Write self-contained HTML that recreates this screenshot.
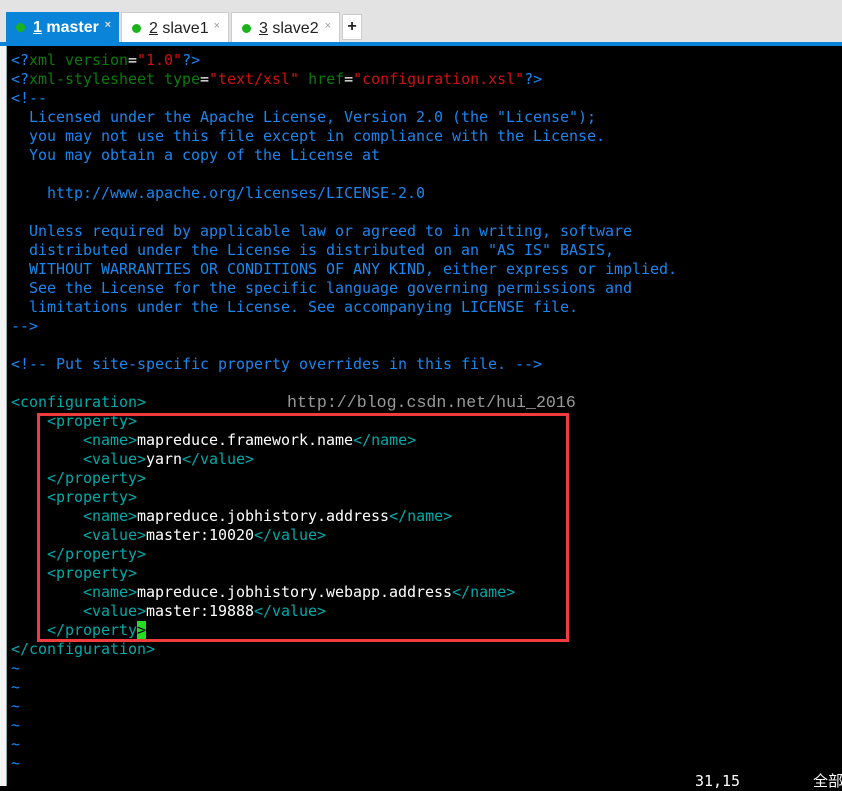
<!DOCTYPE html>
<html><head><meta charset="utf-8"><style>
html,body{margin:0;padding:0;width:842px;height:786px;overflow:hidden;background:#000;}
#top{position:absolute;left:0;top:0;width:842px;height:42px;background:#e3e3e3;}
#band{position:absolute;left:0;top:42px;width:842px;height:4px;background:#0a84d8;}
#left{position:absolute;left:0;top:46px;width:6px;height:740px;background:#f4f4f4;border-right:1px solid #8aa;}
.tab{position:absolute;top:12px;height:30px;font:16px "Liberation Sans",sans-serif;line-height:31px;color:#222;box-sizing:border-box;}
.tab .dot{display:inline-block;width:9px;height:9px;border-radius:50%;background:#1bb31b;margin:0 8px 0 10px;vertical-align:0px;}
.tab u{text-decoration:underline;}
.x{position:absolute;right:8px;top:-2px;font-size:11px;color:#999;}
.t{position:absolute;left:0;white-space:pre;font:15px "DejaVu Sans Mono","Liberation Mono",monospace;line-height:19px;color:#fff;letter-spacing:-0.03px;}
.c{color:#1a86f0}.g{color:#00aaaa}.d{color:#0a7a0a}.r{color:#d01010}.b{color:#1a86f0}
#box{position:absolute;left:37px;top:413px;width:526px;height:223px;border:3px solid #f03c3c;}
#wm{position:absolute;left:287px;top:393px;font:16.6px "Liberation Mono",monospace;color:#9a9a9a;}
#cur{background:#22dd22;color:#000}
</style></head><body>
<div id="top"></div>
<div id="band"></div>
<div id="left"></div>
<div class="tab" style="left:6px;width:113px;background:#0a84d8;color:#fff;font-weight:bold;"><span class="dot"></span><u>1</u> master<span class="x" style="color:#ddd">×</span></div>
<div class="tab" style="left:121px;width:108px;background:#fff;border:1px solid #ccc;border-bottom:none;"><span class="dot"></span><u>2</u> slave1<span class="x">×</span></div>
<div class="tab" style="left:231px;width:109px;background:#fff;border:1px solid #ccc;border-bottom:none;"><span class="dot"></span><u>3</u> slave2<span class="x">×</span></div>
<div class="tab" style="left:342px;top:14px;width:20px;height:26px;background:#fff;border:1px solid #ccc;text-align:center;line-height:24px;font-weight:bold;">+</div>

<div class="t" style="top:51px;left:11px"><span class="b">&lt;?</span><span class="d">xml version</span>=<span class="r">"1.0"</span><span class="b">?&gt;</span>
<span class="b">&lt;?</span><span class="d">xml-stylesheet type</span>=<span class="r">"text/xsl"</span> <span class="d">href</span>=<span class="r">"configuration.xsl"</span><span class="b">?&gt;</span>
<span class="c">&lt;!--
  Licensed under the Apache License, Version 2.0 (the "License");
  you may not use this file except in compliance with the License.
  You may obtain a copy of the License at

    http://www.apache.org/licenses/LICENSE-2.0

  Unless required by applicable law or agreed to in writing, software
  distributed under the License is distributed on an "AS IS" BASIS,
  WITHOUT WARRANTIES OR CONDITIONS OF ANY KIND, either express or implied.
  See the License for the specific language governing permissions and
  limitations under the License. See accompanying LICENSE file.
--&gt;</span>

<span class="c">&lt;!-- Put site-specific property overrides in this file. --&gt;</span>

<span class="g">&lt;configuration&gt;</span>
    <span class="g">&lt;property&gt;</span>
        <span class="g">&lt;name&gt;</span>mapreduce.framework.name<span class="g">&lt;/name&gt;</span>
        <span class="g">&lt;value&gt;</span>yarn<span class="g">&lt;/value&gt;</span>
    <span class="g">&lt;/property&gt;</span>
    <span class="g">&lt;property&gt;</span>
        <span class="g">&lt;name&gt;</span>mapreduce.jobhistory.address<span class="g">&lt;/name&gt;</span>
        <span class="g">&lt;value&gt;</span>master:10020<span class="g">&lt;/value&gt;</span>
    <span class="g">&lt;/property&gt;</span>
    <span class="g">&lt;property&gt;</span>
        <span class="g">&lt;name&gt;</span>mapreduce.jobhistory.webapp.address<span class="g">&lt;/name&gt;</span>
        <span class="g">&lt;value&gt;</span>master:19888<span class="g">&lt;/value&gt;</span>
    <span class="g">&lt;/property</span><span id="cur">&gt;</span>
<span class="g">&lt;/configuration&gt;</span>
<span class="c">~
~
~
~
~
~</span></div>
<div id="box"></div>
<div id="wm">http://blog.csdn.net/hui_2016</div>
<div class="t" style="top:772px;left:695px">31,15</div>
<div class="t" style="top:772px;left:813px;font-family:'Liberation Sans','Noto Sans CJK SC',sans-serif">全部</div>
</body></html>
